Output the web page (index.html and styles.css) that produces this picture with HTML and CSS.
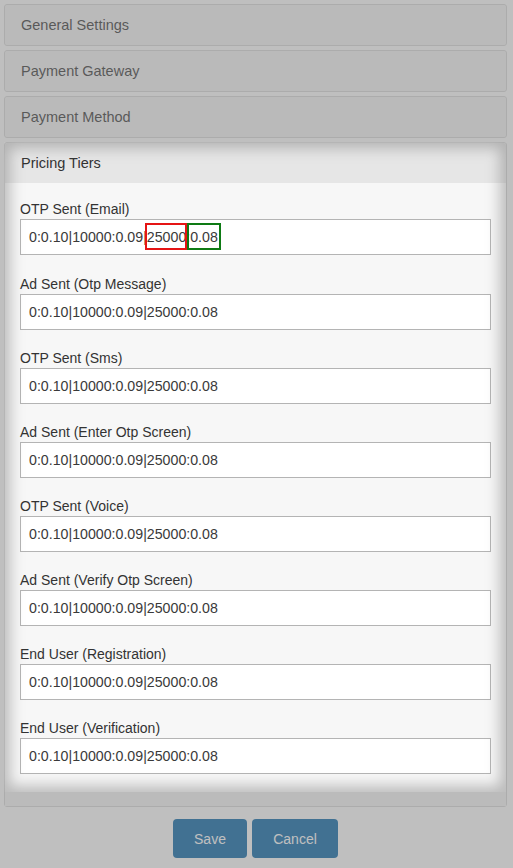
FILE: index.html
```html
<!DOCTYPE html>
<html lang="en">
<head>
<meta charset="utf-8">
<title>Settings</title>
<link rel="stylesheet" href="styles.css">
</head>
<body>
<div class="page">
  <div class="panel"><div class="panel-heading">General Settings</div></div>
  <div class="panel"><div class="panel-heading">Payment Gateway</div></div>
  <div class="panel"><div class="panel-heading">Payment Method</div></div>
  <div class="panel panel-active">
    <div class="panel-heading">Pricing Tiers</div>
    <div class="panel-body">
      <div class="form-group form-group-first">
        <label class="label">OTP Sent (Email)</label>
        <div class="input">0:0.10|10000:0.09|<span class="hl hl-red">25000</span>:<span class="hl hl-green">0.08</span></div>
      </div>
      <div class="form-group">
        <label class="label">Ad Sent (Otp Message)</label>
        <div class="input">0:0.10|10000:0.09|25000:0.08</div>
      </div>
      <div class="form-group">
        <label class="label">OTP Sent (Sms)</label>
        <div class="input">0:0.10|10000:0.09|25000:0.08</div>
      </div>
      <div class="form-group">
        <label class="label">Ad Sent (Enter Otp Screen)</label>
        <div class="input">0:0.10|10000:0.09|25000:0.08</div>
      </div>
      <div class="form-group">
        <label class="label">OTP Sent (Voice)</label>
        <div class="input">0:0.10|10000:0.09|25000:0.08</div>
      </div>
      <div class="form-group">
        <label class="label">Ad Sent (Verify Otp Screen)</label>
        <div class="input">0:0.10|10000:0.09|25000:0.08</div>
      </div>
      <div class="form-group">
        <label class="label">End User (Registration)</label>
        <div class="input">0:0.10|10000:0.09|25000:0.08</div>
      </div>
      <div class="form-group">
        <label class="label">End User (Verification)</label>
        <div class="input">0:0.10|10000:0.09|25000:0.08</div>
      </div>
    </div>
  </div>
  <div class="actions">
    <button class="btn btn-save">Save</button>
    <button class="btn btn-cancel">Cancel</button>
  </div>
</div>
<div class="spotlight"></div>
</body>
</html>
```
FILE: styles.css
```css
html, body {
  margin: 0;
  padding: 0;
  background: #ffffff;
  font-family: "Liberation Sans", Arial, sans-serif;
  color: #333333;
}

.page {
  padding: 4px 6px 0 4px;
  display: flex;
  flex-direction: column;
  gap: 4px;
}

.panel {
  border: 1px solid #d8d8d8;
  border-radius: 3px;
  background: #f7f7f7;
}

.panel-heading {
  height: 40px;
  display: flex;
  align-items: center;
  padding-left: 16px;
  font-size: 14.5px;
  color: #333333;
  background: #f5f5f5;
  border-radius: 3px;
}

.panel-active .panel-heading {
  background: #e6e6e6;
  border-radius: 3px 3px 0 0;
}

.panel-body {
  padding: 16px 15px 14px 15px;
  background: #f7f7f7;
}

.form-group {
  display: flex;
  flex-direction: column;
  margin-bottom: 18px;
}

.form-group-first {
  margin-bottom: 19px;
}

.label {
  display: block;
  font-size: 14px;
  line-height: 20px;
  color: #333333;
}

.input {
  height: 36px;
  box-sizing: border-box;
  border: 1px solid #b4b4b4;
  background: #ffffff;
  padding: 0 8px;
  display: flex;
  align-items: center;
  font-size: 14.2px;
  color: #3a3a3a;
  white-space: pre;
}

.hl {
  position: relative;
}

.hl::after {
  content: "";
  position: absolute;
  top: -6px;
  bottom: -5px;
  border: 2px solid;
}

.hl-red::after {
  left: -2px;
  right: -1px;
  border-color: #e51414;
}

.hl-green::after {
  left: -3px;
  right: -3.5px;
  border-color: #0e7a14;
}

.actions {
  display: flex;
  justify-content: center;
  gap: 5px;
  margin-top: 8px;
}

.btn {
  height: 39px;
  border: none;
  border-radius: 4px;
  background: #0262a5;
  color: #ffffff;
  font-family: "Liberation Sans", Arial, sans-serif;
  font-size: 14px;
  padding: 0;
}

.btn-save { width: 74px; }
.btn-cancel { width: 86px; }

.spotlight {
  position: absolute;
  left: 4px;
  top: 142px;
  width: 502px;
  height: 650px;
  box-shadow: 0 0 0 3000px rgba(128, 128, 128, 0.5),
              inset 0 0 14px 6px rgba(128, 128, 128, 0.5);
  pointer-events: none;
}
```
